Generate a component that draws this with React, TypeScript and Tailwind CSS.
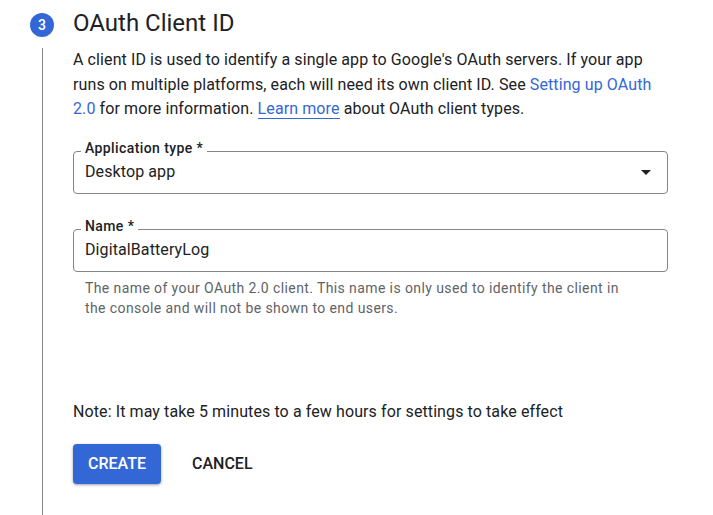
export default function App() {
  return (
    <div className="h-[515px] w-[713px] overflow-hidden bg-white font-['Roboto',sans-serif] text-[#202124]">
      <div className="flex h-full pl-[30px]">
        {/* Step marker + rail */}
        <div className="flex w-6 flex-col pt-[13px]">
          <div className="grid h-6 w-6 place-items-center rounded-full bg-[#3367d6] text-[14px] font-medium leading-none text-white">
            3
          </div>
          <div className="mt-[11px] ml-3 w-px flex-1 bg-[#80868b]" />
        </div>

        {/* Step body */}
        <div className="ml-[19px] w-[595px] pt-[7px]">
          <h2 className="text-[24px] leading-8 font-normal">OAuth Client ID</h2>

          <p className="mt-[9px] text-[16px] leading-[24.5px] tracking-[0.1px]">
            A client ID is used to identify a single app to Google's OAuth servers. If your app runs on multiple
            platforms, each will need its own client ID. See{" "}
            <a className="text-[#3367d6]">Setting up OAuth 2.0</a> for more information.{" "}
            <a className="border-b border-[#3367d6] text-[#3367d6]">Learn more</a> about OAuth client types.
          </p>

          {/* Application type select */}
          <div className="relative mt-[29px] flex h-[43px] items-center rounded-[4px] border border-[#80868b] px-[11px] text-[16px] tracking-[0.1px]">
            <span className="absolute -top-[12px] left-[7px] bg-white px-1 text-[14px] leading-4 font-medium tracking-[0.4px]">
              Application type *
            </span>
            <span className="flex-1">Desktop app</span>
            <svg viewBox="0 0 24 24" className="-mr-[2px] h-6 w-6">
              <path d="M7 10l5 5 5-5z" fill="#202124" />
            </svg>
          </div>

          {/* Name input */}
          <div className="relative mt-[35px] flex h-[43px] items-center rounded-[4px] border border-[#80868b] px-[11px] text-[16px] tracking-[0.1px]">
            <span className="absolute -top-[12px] left-[7px] bg-white px-1 text-[14px] leading-4 font-medium tracking-[0.4px]">
              Name *
            </span>
            <span>DigitalBatteryLog</span>
          </div>
          <p className="mt-[6px] w-[560px] pl-3 text-[14px] leading-5 tracking-[0.4px] text-[#5f6368]">
            The name of your OAuth 2.0 client. This name is only used to identify the client in the console and will
            not be shown to end users.
          </p>

          <p className="mt-[82px] text-[16px] leading-6 tracking-[0.1px]">
            Note: It may take 5 minutes to a few hours for settings to take effect
          </p>

          <div className="mt-5 flex items-center">
            <button className="h-10 w-[88px] rounded-[4px] bg-[#3367d6] text-[16px] font-medium text-white shadow-[0_1px_2px_rgba(60,64,67,0.3),0_1px_3px_1px_rgba(60,64,67,0.15)]">
              CREATE
            </button>
            <button className="ml-[31px] text-[16px] font-medium">CANCEL</button>
          </div>
        </div>
      </div>
    </div>
  );
}
